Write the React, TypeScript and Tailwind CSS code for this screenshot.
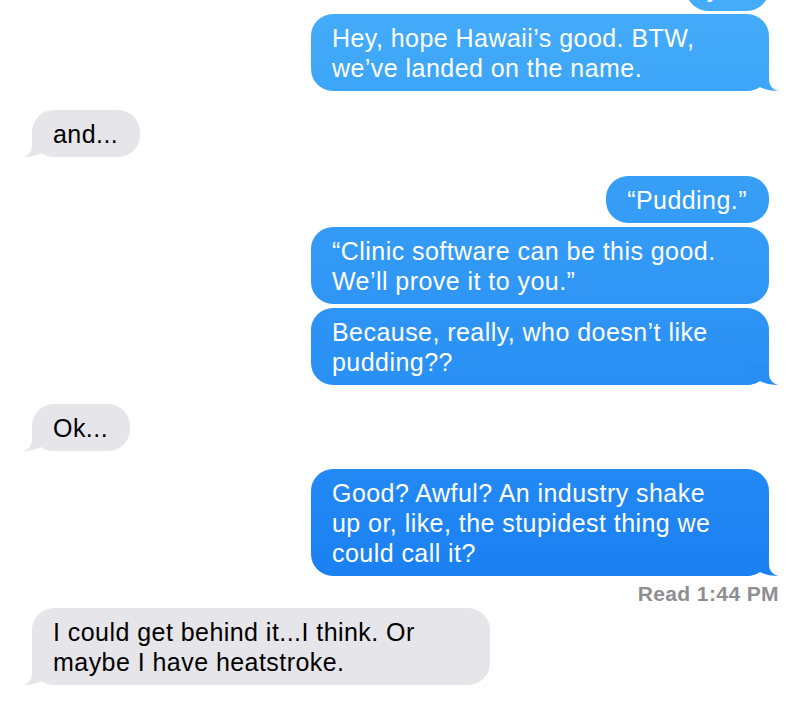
import React from 'react';
import clsx from 'clsx';

type Msg = {
  from: 'me' | 'them';
  lines: string[];
  mt: string;
  tail?: string;
};

const messages: Msg[] = [
  { from: 'me', lines: ['yes'], mt: '-mt-[36px]' },
  { from: 'me', lines: ['Hey, hope Hawaii’s good. BTW,', 'we’ve landed on the name.'], mt: 'mt-[3px]', tail: '#3ea6f8' },
  { from: 'them', lines: ['and...'], mt: 'mt-[19px]', tail: '#e5e5ea' },
  { from: 'me', lines: ['“Pudding.”'], mt: 'mt-[19px]' },
  { from: 'me', lines: ['“Clinic software can be this good.', 'We’ll prove it to you.”'], mt: 'mt-[4px]' },
  { from: 'me', lines: ['Because, really, who doesn’t like', 'pudding??'], mt: 'mt-[4px]', tail: '#298ff4' },
  { from: 'them', lines: ['Ok...'], mt: 'mt-[19px]', tail: '#e5e5ea' },
  { from: 'me', lines: ['Good? Awful? An industry shake', 'up or, like, the stupidest thing we', 'could call it?'], mt: 'mt-[18px]', tail: '#1b81f2' },
];

const last: Msg = { from: 'them', lines: ['I could get behind it...I think. Or', 'maybe I have heatstroke.'], mt: 'mt-[2px]', tail: '#e5e5ea' };

function Tail({ color, left }: { color: string; left: boolean }) {
  return (
    <svg
      width="34"
      height="20"
      viewBox="0 0 34 20"
      className={clsx('absolute bottom-0', left ? '-left-[10px]' : '-right-[10px]')}
    >
      <g transform={left ? 'translate(34 0) scale(-1 1)' : undefined}>
        <path d="M0 20 C6 20 11 18.5 15 16 C19 18.5 26 20 34 20 C28 19 24 15 24 8 L24 0 L0 0 Z" fill={color} />
      </g>
    </svg>
  );
}

function Bubble({ m }: { m: Msg }) {
  const me = m.from === 'me';
  return (
    <div
      className={clsx(
        'relative rounded-[22px] pl-[21px] pr-[22px] py-[8.5px] text-[25px] leading-[30px] tracking-[0.45px]',
        me ? 'self-end bg-fixed bg-linear-to-b from-[#44acf9] to-[#1176f0] text-white' : 'self-start bg-[#e5e5ea] text-black',
        m.lines.length > 1 && 'w-[458px]',
        m.mt
      )}
    >
      {m.lines.map((l, i) => (
        <div key={i} className="relative z-10 whitespace-nowrap">
          {l}
        </div>
      ))}
      {m.tail && <Tail color={m.tail} left={!me} />}
    </div>
  );
}

export default function App() {
  return (
    <div className="w-[801px] h-[706px] overflow-hidden bg-white flex flex-col px-[32px] font-['Liberation_Sans',Arial,sans-serif] antialiased">
      {messages.map((m, i) => (
        <Bubble key={i} m={m} />
      ))}
      <div className="self-end -mr-[10px] mt-[6px] text-[21px] leading-[24px] font-bold tracking-[0.4px] text-[#8e8e93]">
        Read 1:44 PM
      </div>
      <Bubble m={last} />
    </div>
  );
}
